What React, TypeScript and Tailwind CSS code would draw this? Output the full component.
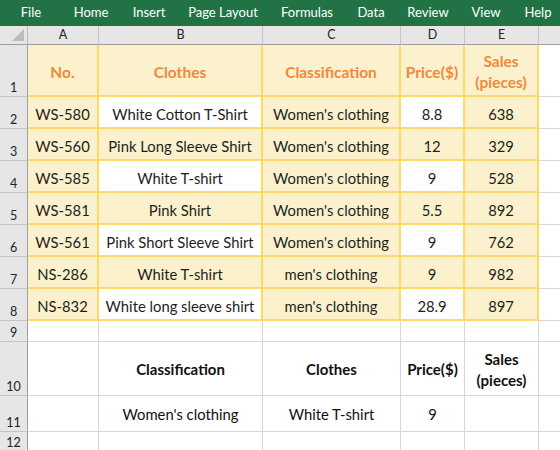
import React from "react";

const colW = [28, 71, 164, 138, 64, 74];
const rowH = [52, 32, 32, 32, 32, 32, 32, 32, 21, 54, 36, 20];
const letters = ["A", "B", "C", "D", "E"];

const menu: [string, number][] = [
  ["File", 62],
  ["Home", 58],
  ["Insert", 58],
  ["Page Layout", 90],
  ["Formulas", 78],
  ["Data", 50],
  ["Review", 64],
  ["View", 52],
  ["Help", 52],
];

const table: string[][] = [
  ["No.", "Clothes", "Classification", "Price($)", "Sales\n(pieces)"],
  ["WS-580", "White Cotton T-Shirt", "Women's clothing", "8.8", "638"],
  ["WS-560", "Pink Long Sleeve Shirt", "Women's clothing", "12", "329"],
  ["WS-585", "White T-shirt", "Women's clothing", "9", "528"],
  ["WS-581", "Pink Shirt", "Women's clothing", "5.5", "892"],
  ["WS-561", "Pink Short Sleeve Shirt", "Women's clothing", "9", "762"],
  ["NS-286", "White T-shirt", "men's clothing", "9", "982"],
  ["NS-832", "White long sleeve shirt", "men's clothing", "28.9", "897"],
];

const lower: Record<number, string[]> = {
  9: ["", "", "", "", ""],
  10: ["", "Classification", "Clothes", "Price($)", "Sales\n(pieces)"],
  11: ["", "Women's clothing", "White T-shirt", "9", ""],
  12: ["", "", "", "", ""],
};

const font = { fontFamily: "Lato, 'Open Sans', sans-serif" };

export default function App() {
  const cells: React.ReactNode[] = [];
  cells.push(
    <div key="corner" className="relative bg-[#e6e6e6] border-r border-b border-r-[#b8b8b8] border-b-[#9e9e9e]">
      <svg className="absolute right-[3px] bottom-[3px]" width="12" height="12" viewBox="0 0 12 12">
        <polygon points="12,0 12,12 0,12" fill="#bcbcbc" />
      </svg>
    </div>
  );
  letters.forEach((l) =>
    cells.push(
      <div key={"h" + l} className="flex items-center justify-center bg-[#e6e6e6] border-r border-b border-r-[#c4c4c4] border-b-[#9e9e9e] text-[12.5px] text-[#222]">
        {l}
      </div>
    )
  );
  cells.push(<div key="hF" className="bg-[#e6e6e6] border-b border-b-[#9e9e9e]" />);

  for (let r = 1; r <= 12; r++) {
    cells.push(
      <div key={"r" + r} className="flex items-end justify-center bg-[#e6e6e6] border-r border-b border-r-[#9e9e9e] border-b-[#c4c4c4] text-[12.5px] text-[#222] leading-none">
        <span className="mb-[2px]">{r}</span>
      </div>
    );
    for (let c = 0; c < 5; c++) {
      if (r <= 8) {
        const txt = table[r - 1][c];
        const white = r % 2 === 0 && (c === 1 || c === 3);
        const head = r === 1;
        cells.push(
          <div
            key={r + "-" + c}
            className={
              "flex items-center justify-center text-center whitespace-pre leading-[21px] border-r-2 border-b-2 border-[#ffd966] pt-[4px] " +
              (white ? "bg-white " : "bg-[#fbf2cd] ") +
              (head ? "font-bold text-[#f4883a] text-[15.5px]" : "text-[#1e1e1e] text-[14.8px]")
            }
          >
            {txt}
          </div>
        );
      } else {
        const txt = lower[r][c];
        cells.push(
          <div
            key={r + "-" + c}
            className={
              "flex items-center justify-center text-center whitespace-pre leading-[21px] border-r border-b border-[#d6d6d6] text-[#111] pt-[2px] " +
              (r === 10 ? "font-bold text-[15px]" : "text-[14.8px]")
            }
          >
            {txt}
          </div>
        );
      }
    }
    cells.push(<div key={"f" + r} className="border-b border-[#d6d6d6]" />);
  }

  return (
    <div className="w-[560px] h-[450px] overflow-hidden bg-white" style={font}>
      <div className="h-[26px] bg-[#217346] flex items-center text-white text-[13px] overflow-hidden whitespace-nowrap">
        {menu.map(([m, w]) => (
          <div key={m} className="flex-none text-center" style={{ width: w }}>
            {m}
          </div>
        ))}
      </div>
      <div
        className="grid"
        style={{
          gridTemplateColumns: colW.map((w) => w + "px").join(" ") + " 1fr",
          gridTemplateRows: "19px " + rowH.map((h) => h + "px").join(" "),
        }}
      >
        {cells}
      </div>
    </div>
  );
}
